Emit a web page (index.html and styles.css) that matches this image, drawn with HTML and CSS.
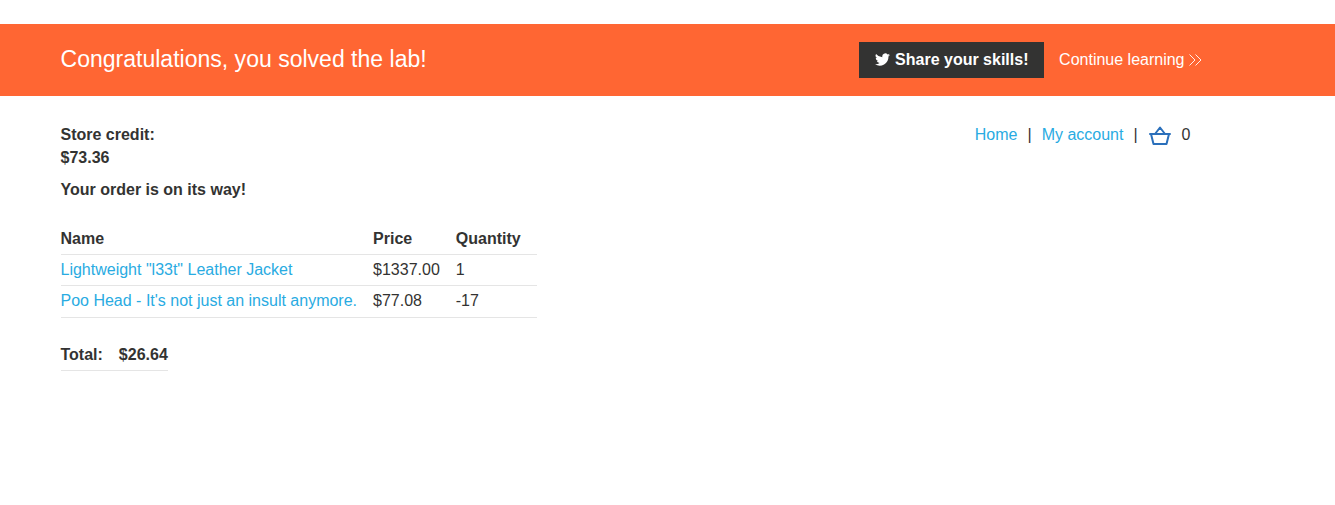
FILE: index.html
```html
<!DOCTYPE html>
<html lang="en">
<head>
<meta charset="utf-8">
<title>Order confirmation</title>
<link rel="stylesheet" href="styles.css">
</head>
<body>
<section class="banner">
  <h1 class="banner-title">Congratulations, you solved the lab!</h1>
  <a class="share"><svg class="bird" viewBox="0 0 24 24"><path fill="#fff" d="M24 4.6a10 10 0 0 1-2.8.8 4.9 4.9 0 0 0 2.1-2.7 10 10 0 0 1-3.1 1.2 4.9 4.9 0 0 0-8.4 4.5A14 14 0 0 1 1.7 3.1a4.9 4.9 0 0 0 1.5 6.6 4.9 4.9 0 0 1-2.2-.6 4.9 4.9 0 0 0 3.9 4.9 5 5 0 0 1-2.2.1 4.9 4.9 0 0 0 4.6 3.4A9.9 9.9 0 0 1 0 19.5a14 14 0 0 0 21.5-12.4A10 10 0 0 0 24 4.6z"/></svg><span>Share your skills!</span></a>
  <a class="continue"><span>Continue learning</span><svg class="chevrons" viewBox="0 0 13 12"><path d="M.5.5 6 6 .5 11.500M6.500.5 12 6 6.500 11.500" fill="none" stroke="#fff" stroke-width=".9"/></svg></a>
</section>
<main class="page">
  <header class="top">
    <div class="credit">Store credit:<br>$73.36</div>
    <nav class="nav">
      <a>Home</a><span>|</span><a>My account</a><span>|</span>
      <svg class="basket" viewBox="0 0 22 20"><path d="M1 8H21M2 8 4.500 18H17.500L20 8M6 8 11 1.500 16 8" fill="none" stroke="#2a6fbb" stroke-width="2" stroke-linecap="round" stroke-linejoin="round"/></svg>
      <span>0</span>
    </nav>
  </header>
  <p class="status">Your order is on its way!</p>
  <table class="items">
    <tr><th>Name</th><th>Price</th><th>Quantity</th></tr>
    <tr><td><a>Lightweight "l33t" Leather Jacket</a></td><td>$1337.00</td><td>1</td></tr>
    <tr><td><a>Poo Head - It's not just an insult anymore.</a></td><td>$77.08</td><td>-17</td></tr>
  </table>
  <table class="total"><tr><th>Total:</th><th>$26.64</th></tr></table>
</main>
</body>
</html>
```
FILE: styles.css
```css
body { margin: 0; background: #fff; color: #333332; font: 16px/23px "Liberation Sans", Arial, sans-serif; }
a { color: #29abe2; }
.banner { display: flex; align-items: center; box-sizing: border-box; height: 72px; margin-top: 24px; padding: 0 133.5px 0 60.5px; background: #ff6633; color: #fff; }
.banner-title { margin: 0 auto 0 0; padding-bottom: 2px; font-size: 23.04px; font-weight: 400; line-height: 26px; }
.share { display: flex; align-items: center; box-sizing: border-box; width: 185px; height: 36px; padding: 0 0 1px 16px; background: #333332; color: #fff; font-weight: 700; }
.bird { width: 15px; height: 15px; margin-right: 5px; }
.continue { display: flex; align-items: center; margin-left: 15px; padding-bottom: 1px; color: #fff; }
.chevrons { width: 13px; height: 12px; margin: 1px 0 0 4px; }
.page { padding: 27px 60.5px 0; }
.top { display: flex; justify-content: space-between; height: 46px; }
.credit, .status { font-weight: 700; }
.nav { display: flex; height: 23px; padding-right: 84px; }
.nav span { margin-left: 10px; }
.nav span + a { margin-left: 10px; }
.nav .basket + span { margin-left: 11px; }
.basket { width: 22px; height: 20px; margin: 3px 0 0 11px; }
.status { margin: 9px 0 22px; }
table { border-collapse: collapse; }
th, td { padding: 4px 16px 4px 0; border-bottom: 1px solid #e5e5e5; line-height: 22.5px; text-align: left; }
.items th { padding: 5px 16px 3px 0; }
.total { margin-top: 22px; }
.total th:last-child { padding-right: 0; }
```
